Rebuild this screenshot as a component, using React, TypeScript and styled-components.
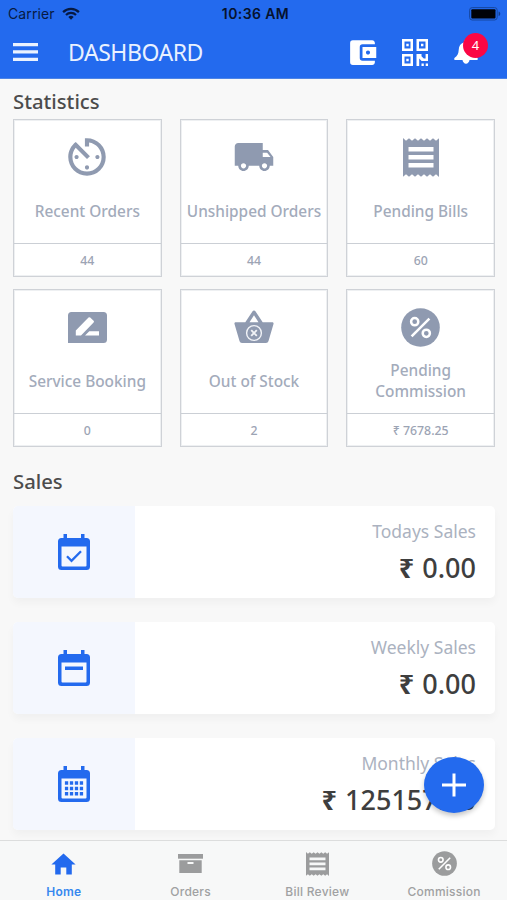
import React from "react";
import styled, { createGlobalStyle } from "styled-components";
import { MdAccountBalanceWallet, MdAvTimer, MdLocalShipping } from "react-icons/md";

const BLUE = "#236aee";
const SLATE = "#8f9ab0";

const GlobalStyle = createGlobalStyle`
  * { box-sizing: border-box; }
  body { margin: 0; background: #f8f8f8; overflow: hidden; font-family: "Noto Sans", "Open Sans", sans-serif; }
  svg { display: block; flex: none; }
`;

const Screen = styled.div`
  position: relative;
  width: 507px;
  height: 900px;
  display: flex;
  flex-direction: column;
  overflow: hidden;
  background: #f8f8f8;
`;

const Header = styled.header`
  height: 79px;
  flex: none;
  background: ${BLUE};
  border-bottom: 1px solid #4d84e6;
`;

const StatusBar = styled.div`
  height: 27px;
  padding: 0 6px 0 8px;
  display: grid;
  grid-template-columns: 1fr auto 1fr;
  align-items: center;
  font-family: Inter, sans-serif;
  font-size: 14px;
  color: #071a42;
`;

const Carrier = styled.div`
  display: flex;
  align-items: center;
  gap: 7px;
  letter-spacing: 0.1px;
`;

const Clock = styled.div`
  padding-left: 2px;
  font-weight: 600;
  font-size: 14px;
  letter-spacing: 0.4px;
  color: #06122d;
`;

const Battery = styled.div`
  justify-self: end;
`;

const NavBar = styled.div`
  height: 50px;
  padding: 0 23px 0 13px;
  display: flex;
  align-items: center;
`;

const NavTitle = styled.h1`
  margin: 0 auto 0 30px;
  font-size: 23px;
  line-height: 30px;
  font-weight: 400;
  letter-spacing: -0.45px;
  color: #e9f1ff;
`;

const NavActions = styled.div`
  display: flex;
  align-items: center;
  color: #fff;
`;

const QrHolder = styled.div`
  margin: 1px 25px 0 22px;
`;

const Bell = styled.div`
  position: relative;
  width: 30px;
  height: 28px;
`;

const Badge = styled.span`
  position: absolute;
  left: 9px;
  top: -5px;
  width: 25px;
  height: 25px;
  border-radius: 50%;
  background: #fb0644;
  color: #fff;
  font-size: 13px;
  line-height: 25px;
  text-align: center;
`;

const Content = styled.main`
  flex: 1;
  min-height: 0;
  padding: 0 12px 0 13px;
  overflow: hidden;
`;

const SectionTitle = styled.h2<{ $top: number; $gap: number }>`
  margin: ${(p) => p.$top}px 0 ${(p) => p.$gap}px;
  font-size: 20.3px;
  line-height: 26px;
  font-weight: 500;
  color: #4c4c4c;
`;

const StatGrid = styled.div`
  display: grid;
  grid-template-columns: repeat(3, 1fr);
  column-gap: 18px;
  row-gap: 12px;
`;

const StatCard = styled.div`
  height: 158px;
  display: flex;
  flex-direction: column;
  align-items: stretch;
  background: #fff;
  border: 1px solid #cfd2d7;
  box-shadow: inset 0 0 0 1px #eef0f2;
`;

const StatIcon = styled.div`
  height: 66px;
  padding-top: 8px;
  display: flex;
  align-items: center;
  justify-content: center;
  color: ${SLATE};
`;

const StatLabel = styled.div`
  height: 50px;
  padding: 0 4px;
  margin-bottom: auto;
  display: flex;
  align-items: center;
  justify-content: center;
  text-align: center;
  font-size: 15.4px;
  line-height: 21px;
  font-weight: 500;
  color: #a3abbb;
`;

const StatValue = styled.div`
  height: 33px;
  border-top: 1px solid #cbcfd5;
  display: flex;
  align-items: center;
  justify-content: center;
  font-size: 12.3px;
  font-weight: 500;
  color: #9ca4b4;
`;

const SalesList = styled.div`
  display: flex;
  flex-direction: column;
  gap: 24px;
`;

const SaleCard = styled.div`
  height: 92px;
  display: flex;
  background: #fff;
  border-radius: 5px;
  box-shadow: 0 5px 9px rgba(0, 0, 0, 0.035);
`;

const SaleIcon = styled.div`
  width: 122px;
  display: flex;
  align-items: center;
  justify-content: center;
  background: #f4f7fe;
  border-radius: 5px 0 0 5px;
  color: ${BLUE};
`;

const SaleText = styled.div`
  flex: 1;
  padding: 11px 19px 0 0;
  text-align: right;
`;

const SaleLabel = styled.div`
  font-size: 17.5px;
  line-height: 28px;
  color: #abb2c0;
`;

const SaleValue = styled.div`
  margin-top: 3px;
  font-size: 27px;
  line-height: 40px;
  font-weight: 500;
  color: #3e3e3e;
`;

const Rupee = styled.span`
  margin-right: 1px;
  font-weight: 700;
`;

const AddButton = styled.button`
  position: absolute;
  left: 424px;
  top: 757px;
  width: 60px;
  height: 56px;
  padding: 0;
  border: 0;
  border-radius: 50%;
  background: ${BLUE};
  color: #fff;
  display: flex;
  align-items: center;
  justify-content: center;
  box-shadow: 0 3px 5px rgba(0, 0, 0, 0.22);
`;

const TabBar = styled.nav`
  height: 60px;
  flex: none;
  border-top: 1px solid #dcdddd;
  background: #f7f8f8;
  display: grid;
  grid-template-columns: repeat(4, 1fr);
`;

const Tab = styled.div<{ $active?: boolean }>`
  display: flex;
  flex-direction: column;
  align-items: center;
  padding: 9px 0 0 1px;
  color: ${(p) => (p.$active ? BLUE : "#9b9c9d")};
`;

const TabIcon = styled.div`
  height: 27px;
  display: flex;
  align-items: center;
`;

const TabLabel = styled.span<{ $active?: boolean }>`
  margin-top: 7px;
  font-family: Inter, sans-serif;
  font-size: 12px;
  line-height: 16px;
  font-weight: ${(p) => (p.$active ? 600 : 500)};
  letter-spacing: 0.25px;
  color: ${(p) => (p.$active ? "#3788ef" : "#a0a1a2")};
`;

const WifiIcon = () => (
  <svg width="18" height="13" viewBox="0 0 18 13">
    <g fill="none" stroke="#071a42" strokeWidth="2.2">
      <path d="M1.1 5.1a11.2 11.2 0 0 1 15.8 0" />
      <path d="M4 8a7.1 7.1 0 0 1 10 0" />
    </g>
    <path d="M9 12.7 6.3 10a3.8 3.8 0 0 1 5.4 0z" fill="#071a42" />
  </svg>
);

const BatteryIcon = () => (
  <svg width="32" height="14" viewBox="0 0 32 14">
    <rect x=".6" y=".6" width="27.6" height="12.4" rx="2.6" fill="none" stroke="#17479f" />
    <rect x="2.3" y="2.2" width="24.2" height="9.2" rx="1" fill="#000208" />
    <path d="M29.6 4.5c2.2.6 2.2 4 0 4.6z" fill="#123c8c" />
  </svg>
);

const MenuIcon = () => (
  <svg width="25" height="18" viewBox="0 0 25 18" fill="#eaf2ff">
    <path d="M0 0h25v3.200H0zM0 7.300h25v3.300H0zM0 14.700h25V18H0z" />
  </svg>
);

const QrIcon = () => (
  <svg width="28" height="28" viewBox="0 0 28 28" fill="currentColor">
    <path
      fillRule="evenodd"
      d="M1 0h11v12H1zM3.5 2.5v7h6v-7zM15.5 0h11.5v12H15.5zM18 2.5v7h6.500v-7zM1 15h11v12H1zM3.500 17.500v7h6v-7z"
    />
    <path d="M5.300 4.700h2.400v2.600H5.300zM20 4.700h2.400v2.600H20zM5.300 19.700h2.400v2.600H5.300zM15.500 15h5v2.200l2.300 2.300h1.800V15H27v7h-6.400l-2.400-2.400V27h-2.700zM20.500 24.500h2.300V27h-2.300zM24.700 24.500H27V27h-2.300z" />
  </svg>
);

const BellIcon = () => (
  <svg width="25" height="26" viewBox="0 0 25 26" fill="currentColor">
    <path d="M12 1.500c-1.200 0-2 .8-2 2v.8C6.500 5.500 4.900 8 4.700 12c-.2 3.600-1.200 6-4 7.800-.8.700-.6 2.200.6 2.200h7.200c.3 2 1.700 3.700 3.500 3.700s3.200-1.700 3.500-3.700h7.200c1.200 0 1.400-1.500.6-2.200-2.800-1.800-3.800-4.200-4-7.800-.2-4-1.800-6.500-5.300-7.700v-.8c0-1.200-.8-2-2-2z" />
  </svg>
);

const zigzag = (y: number, tip: number) =>
  Array.from({ length: 6 }, (_, i) => `L${i * 6 + 3} ${tip}L${i * 6 + 6} ${y}`).join("");
const zigzagBack = (y: number, tip: number) =>
  Array.from({ length: 6 }, (_, i) => `L${33 - i * 6} ${tip}L${30 - i * 6} ${y}`).join("");

const ReceiptIcon = ({ width = 36, height = 39 }: { width?: number; height?: number }) => (
  <svg width={width} height={height} viewBox="0 0 36 39" preserveAspectRatio="none" fill="currentColor">
    <path
      fillRule="evenodd"
      d={`M0 0${zigzag(0.3, 2.8)}V39${zigzagBack(38.7, 36.2)}zM5.500 9v4.500h25V9zM5.500 17v4.500h25V17zM5.500 25v4.500h25V25z`}
    />
  </svg>
);

const BookingIcon = () => (
  <svg width="39" height="31" viewBox="0 0 39 31">
    <path d="M3.500 0h32A3.500 3.500 0 0 1 39 3.500v24A3.500 3.500 0 0 1 35.500 31H0V3.500A3.500 3.500 0 0 1 3.500 0z" fill="currentColor" />
    <path d="M7.800 23.500v-5L20.500 5.600a1.200 1.200 0 0 1 1.700 0l3.400 3.200a1.200 1.200 0 0 1 0 1.700L13 23.500zM17 23.500l4.300-4.200h9.700v4.200z" fill="#fff" />
  </svg>
);

const BasketIcon = () => (
  <svg width="40" height="34" viewBox="0 0 40 34">
    <path
      fillRule="evenodd"
      d="M11.300 12.300 18.400 1.400a2 2 0 0 1 3.200 0l7.100 10.900H38c1.200 0 1.800.8 1.500 1.800l-5 17c-.4 1.200-1.200 1.900-2.500 1.900H8c-1.300 0-2.100-.7-2.500-1.900l-5-17c-.3-1 .3-1.800 1.500-1.800zM15.500 12.300h9L20 5.300z"
      fill="currentColor"
    />
    <g fill="none" stroke="#f1f3f7" strokeWidth="1.400">
      <circle cx="20" cy="23" r="7.400" />
      <path d="m17.200 20.200 5.600 5.600m0-5.600-5.600 5.600" strokeWidth="1.900" />
    </g>
  </svg>
);

const PercentIcon = ({ size = 39 }: { size?: number }) => (
  <svg width={size} height={size} viewBox="0 0 39 39">
    <circle cx="19.500" cy="19.500" r="19.300" fill="currentColor" />
    <g fill="none" stroke="#fff" strokeWidth="2.500">
      <circle cx="13.700" cy="13.700" r="3.600" />
      <circle cx="25.300" cy="25.300" r="3.600" />
      <path d="M10.600 28.400 28.400 10.600" />
    </g>
  </svg>
);

type CalendarKind = "today" | "week" | "month";

const CalendarIcon = ({ kind }: { kind: CalendarKind }) => (
  <svg width="32" height="37" viewBox="0 0 32 37" fill="currentColor">
    <path
      fillRule="evenodd"
      d="M5.500 0h3.500v4h14V0h3.500v4H28.500A3.500 3.500 0 0 1 32 7.500v25A3.500 3.500 0 0 1 28.500 36h-25A3.500 3.500 0 0 1 0 32.500v-25A3.500 3.500 0 0 1 3.500 4h2zM3.500 12.500V31.500q0 1 1 1h23q1 0 1-1V12.500z"
    />
    {kind === "today" && <path d="m9 22.300 4.500 4.500 9.500-9.600" fill="none" stroke="currentColor" strokeWidth="2.300" />}
    {kind === "week" && <path d="M7 16.500h18V20H7z" />}
    {kind === "month" && (
      <path d="M6.900 17h18.200M6.900 22.400h18.200M6.900 27.800h18.200" fill="none" stroke="currentColor" strokeWidth="3.500" strokeDasharray="3.300 1.667" />
    )}
  </svg>
);

const PlusIcon = () => (
  <svg width="26" height="26" viewBox="0 0 26 26" fill="currentColor">
    <path d="M11.500 1.500h3v10h10.500v3H14.500v10h-3v-10H1v-3h10.500z" />
  </svg>
);

const HomeIcon = () => (
  <svg width="25" height="22" viewBox="0 0 25 22" fill="currentColor">
    <path d="M12.500.4 24.600 11.500h-3.800v10h-5.500V14.500H9.700v7H4.200v-10H.4z" />
  </svg>
);

const ArchiveIcon = () => (
  <svg width="25" height="22" viewBox="0 0 25 22" fill="currentColor">
    <path d="M0 1h25v4.700H0z" />
    <path fillRule="evenodd" d="M1.300 7.300h22.400V20H1.300zM9.500 9v2h6V9z" />
  </svg>
);

const stats = [
  { label: "Recent Orders", value: "44", icon: <MdAvTimer size={50} /> },
  { label: "Unshipped Orders", value: "44", icon: <MdLocalShipping size={42} /> },
  { label: "Pending Bills", value: "60", icon: <ReceiptIcon /> },
  { label: "Service Booking", value: "0", icon: <BookingIcon /> },
  { label: "Out of Stock", value: "2", icon: <BasketIcon /> },
  { label: "Pending Commission", value: "₹ 7678.25", icon: <PercentIcon /> },
];

const sales: { label: string; amount: string; kind: CalendarKind }[] = [
  { label: "Todays Sales", amount: "0.00", kind: "today" },
  { label: "Weekly Sales", amount: "0.00", kind: "week" },
  { label: "Monthly Sales", amount: "125157.50", kind: "month" },
];

const tabs = [
  { label: "Home", icon: <HomeIcon />, active: true },
  { label: "Orders", icon: <ArchiveIcon /> },
  { label: "Bill Review", icon: <ReceiptIcon width={23} height={24} /> },
  { label: "Commission", icon: <PercentIcon size={25} /> },
];

export default function App() {
  return (
    <>
      <GlobalStyle />
      <Screen>
        <Header>
          <StatusBar>
            <Carrier>
              Carrier
              <WifiIcon />
            </Carrier>
            <Clock>10:36 AM</Clock>
            <Battery>
              <BatteryIcon />
            </Battery>
          </StatusBar>
          <NavBar>
            <MenuIcon />
            <NavTitle>DASHBOARD</NavTitle>
            <NavActions>
              <MdAccountBalanceWallet size={33} />
              <QrHolder>
                <QrIcon />
              </QrHolder>
              <Bell>
                <BellIcon />
                <Badge>4</Badge>
              </Bell>
            </NavActions>
          </NavBar>
        </Header>
        <Content>
          <SectionTitle $top={9} $gap={5}>Statistics</SectionTitle>
          <StatGrid>
            {stats.map((s) => (
              <StatCard key={s.label}>
                <StatIcon>{s.icon}</StatIcon>
                <StatLabel>{s.label}</StatLabel>
                <StatValue>{s.value}</StatValue>
              </StatCard>
            ))}
          </StatGrid>
          <SectionTitle $top={21} $gap={12}>Sales</SectionTitle>
          <SalesList>
            {sales.map((s) => (
              <SaleCard key={s.label}>
                <SaleIcon>
                  <CalendarIcon kind={s.kind} />
                </SaleIcon>
                <SaleText>
                  <SaleLabel>{s.label}</SaleLabel>
                  <SaleValue>
                    <Rupee>₹</Rupee> {s.amount}
                  </SaleValue>
                </SaleText>
              </SaleCard>
            ))}
          </SalesList>
        </Content>
        <TabBar>
          {tabs.map((t) => (
            <Tab key={t.label} $active={t.active}>
              <TabIcon>{t.icon}</TabIcon>
              <TabLabel $active={t.active}>{t.label}</TabLabel>
            </Tab>
          ))}
        </TabBar>
        <AddButton aria-label="Add">
          <PlusIcon />
        </AddButton>
      </Screen>
    </>
  );
}
